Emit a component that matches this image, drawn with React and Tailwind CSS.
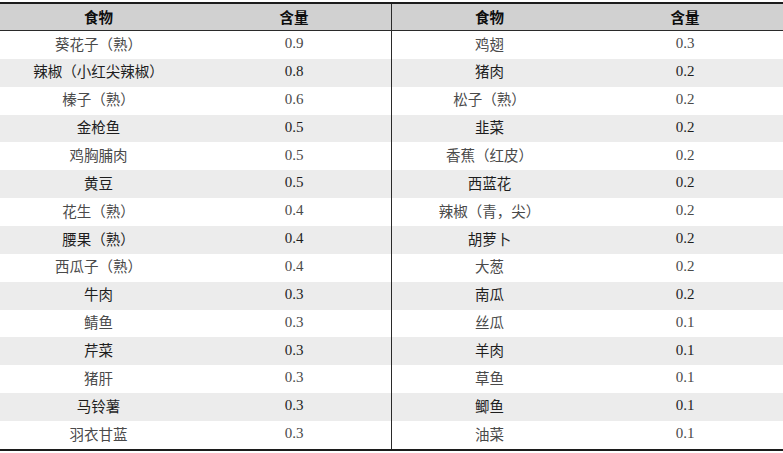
const LEFT = [
  ['葵花子（熟）', '0.9'],
  ['辣椒（小红尖辣椒）', '0.8'],
  ['榛子（熟）', '0.6'],
  ['金枪鱼', '0.5'],
  ['鸡胸脯肉', '0.5'],
  ['黄豆', '0.5'],
  ['花生（熟）', '0.4'],
  ['腰果（熟）', '0.4'],
  ['西瓜子（熟）', '0.4'],
  ['牛肉', '0.3'],
  ['鲭鱼', '0.3'],
  ['芹菜', '0.3'],
  ['猪肝', '0.3'],
  ['马铃薯', '0.3'],
  ['羽衣甘蓝', '0.3'],
]

const RIGHT = [
  ['鸡翅', '0.3'],
  ['猪肉', '0.2'],
  ['松子（熟）', '0.2'],
  ['韭菜', '0.2'],
  ['香蕉（红皮）', '0.2'],
  ['西蓝花', '0.2'],
  ['辣椒（青，尖）', '0.2'],
  ['胡萝卜', '0.2'],
  ['大葱', '0.2'],
  ['南瓜', '0.2'],
  ['丝瓜', '0.1'],
  ['羊肉', '0.1'],
  ['草鱼', '0.1'],
  ['鲫鱼', '0.1'],
  ['油菜', '0.1'],
]

const COLS = 'grid grid-cols-[197px_195px_195px_196px]'
const HEAD = 'flex items-center justify-center font-["Noto_Sans_CJK_SC",sans-serif]'
const CELL = 'flex items-center justify-center pb-[3px]'
const NAME = `${CELL} font-['Noto_Sans_CJK_SC',sans-serif] [font-feature-settings:'fwid'] [text-spacing-trim:space-all]`

export default function App() {
  return (
    <div lang="zh-CN" className="w-[783px] h-[453px] bg-white pt-[2px] overflow-hidden font-['Liberation_Serif','Noto_Sans_CJK_SC',serif]">
      <div className="border-t-2 border-b-2 border-[#1c1c1c]">
        {/* Header */}
        <div className={`${COLS} h-[27px] bg-[#d1d1d1] border-b border-[#2a2a2a] text-[14.5px] font-bold text-[#0e0e0e]`}>
          <div className={HEAD}>食物</div>
          <div className={`${HEAD} border-r border-[#2a2a2a]`}>含量</div>
          <div className={HEAD}>食物</div>
          <div className={HEAD}>含量</div>
        </div>

        {/* Rows */}
        {LEFT.map((l, i) => {
          const r = RIGHT[i]
          const shaded = i % 2 === 1
          return (
            <div
              key={i}
              className={`${COLS} h-[27.87px] ${shaded ? 'bg-[#ececec] text-[#1e1e1e]' : 'bg-white text-[#4a4a4a]'}`}
            >
              <div className={`${NAME} text-[14.5px]`}>{l[0]}</div>
              <div className={`${CELL} border-r border-[#2a2a2a] text-[15px]`}>{l[1]}</div>
              <div className={`${NAME} text-[14.5px]`}>{r[0]}</div>
              <div className={`${CELL} text-[15px]`}>{r[1]}</div>
            </div>
          )
        })}
      </div>
    </div>
  )
}
